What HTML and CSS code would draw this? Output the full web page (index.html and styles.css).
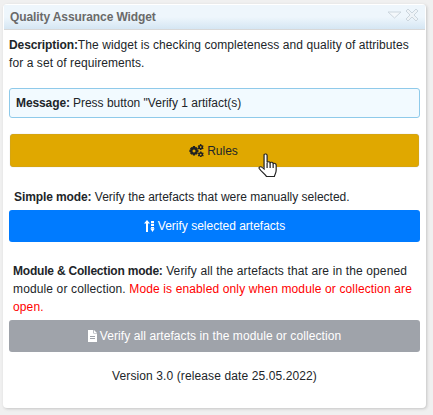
FILE: index.html
```html
<!DOCTYPE html>
<html lang="en">
<head>
    <meta charset="UTF-8">
    <title>Quality Assurance Widget</title>
    <link rel="stylesheet" href="styles.css">
</head>
<body>
    <div class="widget">
        <div class="title-bar">
            <strong class="title-text">Quality Assurance Widget</strong>
            <div class="title-icons">
                <svg width="15" height="8" viewBox="0 0 15 8"><path d="M1 1H14L7.5 7Z" fill="#f4f8fb" stroke="#ccd6de"/></svg>
                <svg width="14" height="14" viewBox="0 0 14 14"><path d="M1 3L3 1L7 5L11 1L13 3L9 7L13 11L11 13L7 9L3 13L1 11L5 7Z" fill="#eef3f7" stroke="#ccd6de"/></svg>
            </div>
        </div>
        <div class="content">
            <p class="description"><strong>Description:</strong>The widget is checking completeness and quality of attributes for a set of requirements.</p>
            <div class="message"><strong>Message:</strong> Press button "Verify 1 artifact(s)</div>
            <div class="btn btn-rules">
                <svg width="15" height="13" viewBox="0 0 15 13"><g fill="#212121"><path d="M4 2h2l.3 1.300 1-.4 1.600 1.500-.6 1 1.200.4v2.200l-1.200.3.6 1-1.600 1.500-1-.6-.3 1.300H4l-.4-1.300-1 .6L1 9.300l.6-1L.4 8V5.800l1.200-.4-.6-1L2.600 2.900l1 .4zM5 5.400a1.500 1.500 0 1 0 .01 0z" fill-rule="evenodd"/><path d="M11.500 0l.9.3.1.8.8.4.7-.3.6 1-.6.6v.8l.6.6-.6 1-.7-.3-.8.4-.1.8h-1.500l-.1-.8-.7-.4-.8.3-.6-1 .6-.6v-.8l-.6-.6.6-1 .8.3.7-.4.1-.8zM11.700 2.200a.8.8 0 1 0 .01 0z" fill-rule="evenodd"/><path d="M11 7.500h1.500l.1.8.8.4.7-.3.6 1-.6.6v.8l.6.6-.6 1-.7-.3-.8.4-.1.8H11l-.1-.8-.7-.4-.8.3-.6-1 .6-.6v-.8l-.6-.6.6-1 .8.3.7-.4zM11.700 9.700a.8.8 0 1 0 .01 0z" fill-rule="evenodd"/></g></svg>
                <span>Rules</span>
            </div>
            <p class="mode-text simple"><strong>Simple mode:</strong> Verify the artefacts that were manually selected.</p>
            <div class="btn btn-blue">
                <svg width="11" height="12" viewBox="0 0 11 12"><g fill="#fff"><path d="M3 0L6 3.500H4V12H2V3.500H0Z"/><path d="M7 1h3v2.200H7zM7 4h3v2H7zM7 7h3v1.500H7z"/><path d="M6.300 8.500H10.700L8.500 12Z"/></g></svg>
                <span>Verify selected artefacts</span>
            </div>
            <p class="mode-text module"><strong>Module &amp; Collection mode:</strong> Verify all the artefacts that are in the opened module or collection. <span class="red-text">Mode is enabled only when module or collection are open.</span></p>
            <div class="btn btn-gray">
                <svg width="9" height="12" viewBox="0 0 9 12"><path d="M0 0H5.300V3.500H9V12H0ZM6 0L9 3H6ZM2 6V7H7V6ZM2 8V9H7V8Z" fill="#fff" fill-rule="evenodd"/></svg>
                <span>Verify all artefacts in the module or collection</span>
            </div>
            <p class="version">Version 3.0 (release date 25.05.2022)</p>
        </div>
        <svg class="cursor" width="20" height="26" viewBox="0 0 16.500 26" preserveAspectRatio="none"><path d="M5 1.500C6 .5 7.500 1 7.500 2.500V9.500C8 8.500 9.700 8.500 10 9.700 10.700 9 12.200 9.200 12.500 10.500 13.300 10 15 10.300 15 12V17C15 20 14 21 13.500 23.500H7C6 21 3 19 1 15.500 .5 14 2 13 3.500 14.500L5 16Z" fill="#fff" stroke="#222" stroke-width="1"/><path d="M7.500 10V15M10 10V15M12.500 10.500V15" stroke="#222" fill="none"/></svg>
    </div>
</body>
</html>
```
FILE: styles.css
```css
body {
    margin: 0;
    padding: 4px 7px 7px 3px;
    background-color: #f0f0f0;
    font-family: "Liberation Sans", Arial, sans-serif;
    font-size: 12px;
    line-height: 18px;
    color: #212529;
}

p {
    margin: 0;
}

strong {
    letter-spacing: -0.1px;
}

.widget {
    position: relative;
    height: 404px;
    background-color: #fff;
    border-radius: 4px;
    box-shadow: 1px 1px 3px #c4c4c4;
    box-sizing: border-box;
    padding-top: 1px;
}

.title-bar {
    height: 25px;
    margin: 0 1px;
    padding: 0 6px;
    display: flex;
    justify-content: space-between;
    align-items: center;
    background: linear-gradient(#eef6fc 0%, #eef6fc 50%, #d5e6f3 100%);
    border-bottom: 1px solid #d8d8d8;
    box-sizing: border-box;
}

.title-text {
    color: #6a6a6a;
}

.title-icons {
    display: flex;
    align-items: center;
    gap: 3px;
    margin-bottom: 5px;
}

.content {
    padding: 6px 6px 0;
}

.description {
    letter-spacing: 0.08px;
}

.message {
    margin-top: 16px;
    height: 30px;
    padding-left: 6px;
    display: flex;
    align-items: center;
    gap: 3px;
    background-color: #f2faff;
    border: 1px solid #8fcaea;
    border-radius: 3px;
    box-sizing: border-box;
}

.btn {
    height: 32px;
    display: flex;
    justify-content: center;
    align-items: center;
    gap: 3px;
    border-radius: 3px;
    color: #fff;
}

.btn-rules {
    margin: 16px 1px 0;
    height: 33px;
    padding-right: 2px;
    color: #212529;
    background-color: #e0a800;
    border: 1px solid #d6a510;
    box-shadow: 0 0 1px #bbb;
    box-sizing: border-box;
}

.btn-blue {
    background-color: #007bff;
}

.btn-gray {
    background-color: #9fa3aa;
    letter-spacing: 0.08px;
}

.mode-text.simple {
    margin-top: 21px;
    margin-bottom: 4px;
    padding-left: 5px;
}

.mode-text.module {
    margin-top: 20px;
    margin-bottom: 4px;
    padding-left: 4px;
    letter-spacing: 0.13px;
}

.module strong {
    letter-spacing: -0.2px;
}

.red-text {
    color: #ff0000;
}

.version {
    margin-top: 15px;
    text-align: center;
    letter-spacing: 0.11px;
}

.cursor {
    position: absolute;
    left: 255px;
    top: 149px;
}
```
